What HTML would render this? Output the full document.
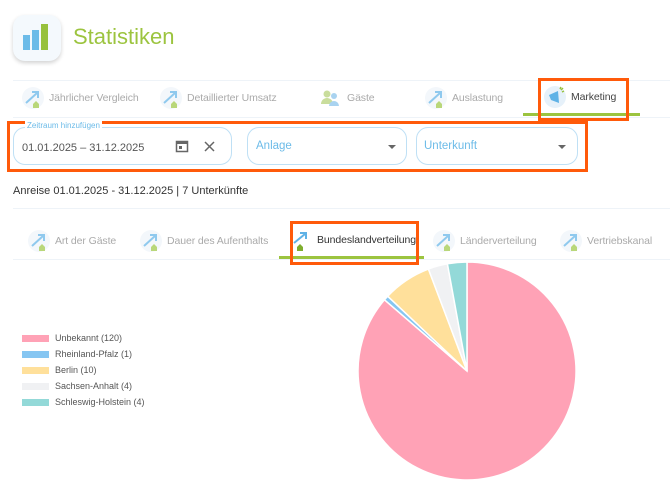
<!DOCTYPE html>
<html><head><meta charset="utf-8"><style>
*{margin:0;padding:0;box-sizing:border-box}
body{width:670px;height:492px;overflow:hidden;background:#fff;font-family:"Liberation Sans",sans-serif;position:relative}
.abs{position:absolute}
.tab{position:absolute;font-size:10.5px;color:#aaa;display:flex;align-items:center;white-space:nowrap;letter-spacing:-0.1px}
.ic{width:22px;height:22px;border-radius:50%;background:#f3f7fb;position:relative;margin-right:5px;flex:none}
.ic svg{position:absolute;left:0;top:0}
.hl{position:absolute;border:3px solid #ff5a0a}
.field{position:absolute;border:1px solid #bfe0f5;border-radius:12px;height:38px;top:127px}
.leg{position:absolute;left:22px;font-size:9px;color:#555;display:flex;align-items:center}
.leg i{display:inline-block;width:27px;height:7px;margin-right:6px}
</style></head><body>
<div class="abs" style="left:13px;top:15px;width:48px;height:46px;border-radius:12px;background:#f4f9fd;box-shadow:0 2px 4px rgba(0,0,0,.18)">
 <div class="abs" style="left:10px;top:20px;width:7px;height:15px;background:#6cbbe8"></div>
 <div class="abs" style="left:19px;top:15px;width:7px;height:20px;background:#6cbbe8"></div>
 <div class="abs" style="left:28px;top:9px;width:7px;height:26px;background:#97c13c"></div>
</div>
<div class="abs" style="left:73px;top:24px;font-size:22px;color:#9cc43f">Statistiken</div>
<div class="abs" style="left:13px;top:80px;width:657px;height:1px;background:#eef3f8"></div>
<div class="abs" style="left:13px;top:117px;width:657px;height:1px;background:#eef3f8"></div>

<svg width="0" height="0" style="position:absolute"><defs>
<g id="ar"><path d="M4 16 L15 6 M10 5 H16 V11" stroke="#8fc9ee" stroke-width="2" fill="none"/><path d="M11 17 l3-3 3 3 v4 h-6z" fill="#b9d77a"/></g></defs></svg>

<div class="tab" style="left:22px;top:87px"><span class="ic"><svg width="22" height="22"><use href="#ar"/></svg></span>Jährlicher Vergleich</div>
<div class="tab" style="left:160px;top:87px"><span class="ic"><svg width="22" height="22"><use href="#ar"/></svg></span>Detaillierter Umsatz</div>
<div class="tab" style="left:320px;top:87px"><span class="ic" style="background:none"><svg width="22" height="22"><circle cx="7" cy="7" r="3.5" fill="#c9dd9c"/><path d="M1 17 a6 6 0 0 1 12 0z" fill="#c9dd9c"/><circle cx="14" cy="9" r="3" fill="#a9d3f0"/><path d="M9 19 a5 5 0 0 1 10 0z" fill="#a9d3f0"/></svg></span>Gäste</div>
<div class="tab" style="left:425px;top:87px"><span class="ic"><svg width="22" height="22"><use href="#ar"/></svg></span>Auslastung</div>
<div class="tab" style="left:544px;top:86px;color:#444"><span class="ic" style="background:#e6f1fa"><svg width="22" height="22"><path d="M5 9 L14 5 L15 17 L7 14z" fill="#5fb2e6"/><path d="M16 3 l1-2 M18 6 l2-1 M17 4 l2-2" stroke="#97c13c" stroke-width="1.5"/></svg></span>Marketing</div>
<div class="abs" style="left:523px;top:113px;width:117px;height:3px;background:#9cc43f"></div>
<div class="hl" style="left:538px;top:78px;width:91px;height:43px"></div>

<div class="hl" style="left:7px;top:121px;width:581px;height:51px"></div>
<div class="field" style="left:13px;width:219px"></div>
<div class="abs" style="left:25px;top:121px;font-size:8px;color:#6cbbe8;background:#fff;padding:0 2px">Zeitraum hinzufügen</div>
<div class="abs" style="left:22px;top:142px;font-size:11px;color:#555">01.01.2025 – 31.12.2025</div>
<svg class="abs" style="left:175px;top:139px" width="14" height="14"><rect x="1.5" y="2.5" width="11" height="10" fill="none" stroke="#666" stroke-width="1.5"/><rect x="1.5" y="2.5" width="11" height="2.5" fill="#666"/><rect x="4" y="7" width="3" height="3" fill="#666"/></svg>
<svg class="abs" style="left:204px;top:141px" width="11" height="11"><path d="M1 1 L10 10 M10 1 L1 10" stroke="#666" stroke-width="1.5"/></svg>
<div class="field" style="left:247px;width:160px"></div>
<div class="abs" style="left:256px;top:140px;font-size:11.5px;color:#6cbbe8">Anlage</div>
<div class="abs" style="left:388px;top:145px;border:4px solid transparent;border-top:4px solid #666"></div>
<div class="field" style="left:416px;width:162px"></div>
<div class="abs" style="left:424px;top:140px;font-size:11.5px;color:#6cbbe8">Unterkunft</div>
<div class="abs" style="left:558px;top:145px;border:4px solid transparent;border-top:4px solid #666"></div>

<div class="abs" style="left:13px;top:185px;font-size:11px;color:#333">Anreise 01.01.2025 - 31.12.2025 | 7 Unterkünfte</div>
<div class="abs" style="left:13px;top:208px;width:657px;height:1px;background:#eef3f8"></div>
<div class="abs" style="left:13px;top:259px;width:657px;height:1px;background:#eef3f8"></div>

<div class="tab" style="left:28px;top:230px"><span class="ic"><svg width="22" height="22"><use href="#ar"/></svg></span>Art der Gäste</div>
<div class="tab" style="left:140px;top:230px"><span class="ic"><svg width="22" height="22"><use href="#ar"/></svg></span>Dauer des Aufenthalts</div>
<div class="tab" style="left:290px;top:229px;color:#333"><span class="ic" style="background:none"><svg width="22" height="22"><path d="M4 14 L15 5 M10 4 H16 V10" stroke="#5fb2e6" stroke-width="2" fill="none"/><path d="M7 18 l3-3 3 3 v4 h-6z" fill="#7fae2e"/></svg></span>Bundeslandverteilung</div>
<div class="tab" style="left:433px;top:230px"><span class="ic"><svg width="22" height="22"><use href="#ar"/></svg></span>Länderverteilung</div>
<div class="tab" style="left:560px;top:230px"><span class="ic"><svg width="22" height="22"><use href="#ar"/></svg></span>Vertriebskanal</div>
<div class="abs" style="left:279px;top:256px;width:145px;height:3px;background:#9cc43f"></div>
<div class="hl" style="left:290px;top:221px;width:129px;height:44px"></div>

<div class="leg" style="top:333px"><i style="background:#ffa2b6"></i>Unbekannt (120)</div>
<div class="leg" style="top:349px"><i style="background:#86c6f2"></i>Rheinland-Pfalz (1)</div>
<div class="leg" style="top:365px"><i style="background:#ffe09b"></i>Berlin (10)</div>
<div class="leg" style="top:381px"><i style="background:#f0f1f3"></i>Sachsen-Anhalt (4)</div>
<div class="leg" style="top:397px"><i style="background:#93d9d8"></i>Schleswig-Holstein (4)</div>

<svg class="abs" style="left:0;top:0" width="670" height="492">
<g stroke="#fff" stroke-width="1.5">
<path d="M467 371 L467 262 A109 109 0 1 1 384.5 299.8 Z" fill="#ffa2b6"/>
<path d="M467 371 L384.5 299.8 A109 109 0 0 1 387.7 296.2 Z" fill="#86c6f2"/>
<path d="M467 371 L387.7 296.2 A109 109 0 0 1 428.4 269 Z" fill="#ffe09b"/>
<path d="M467 371 L428.4 269 A109 109 0 0 1 447.4 263.8 Z" fill="#f0f1f3"/>
<path d="M467 371 L447.4 263.8 A109 109 0 0 1 467 262 Z" fill="#93d9d8"/>
</g></svg>
</body></html>
